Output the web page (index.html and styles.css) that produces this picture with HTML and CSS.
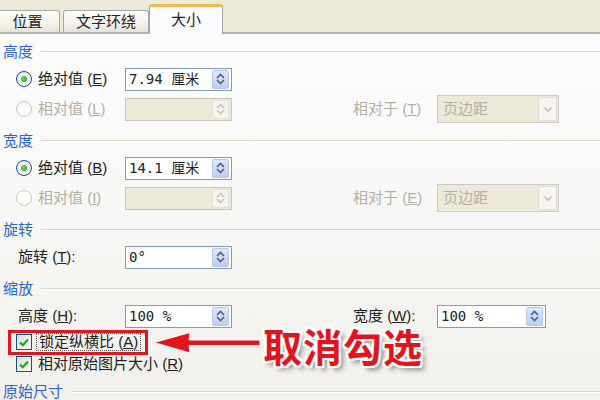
FILE: index.html
```html
<!DOCTYPE html>
<html lang="zh-CN">
<head>
    <meta charset="UTF-8">
    <meta name="viewport" content="width=device-width, initial-scale=1.0">
    <title>设置图片格式 - 大小</title>
    <link rel="stylesheet" href="styles.css">
</head>
<body>

    <div class="dialog">
        <!-- 选项卡 -->
        <div class="tabs">
            <div class="tab first">位置</div>
            <div class="tab">文字环绕</div>
            <div class="tab active">大小</div>
        </div>

        <div class="panel">
            <!-- 高度 -->
            <section class="group">
                <div class="group-title"><span>高度</span></div>
                <div class="row">
                    <label class="option"><span class="radio checked"></span><span>绝对值 (<u>E</u>)</span></label>
                    <div class="spin">
                        <span class="spin-value">7.94 厘米</span>
                        <span class="spin-btn"><svg width="9" height="12" viewBox="0 0 9 12"><path d="M1 5L4.5 1.5L8 5M1 7L4.5 10.5L8 7"/></svg></span>
                    </div>
                </div>
                <div class="row">
                    <label class="option off"><span class="radio"></span><span>相对值 (<u>L</u>)</span></label>
                    <div class="spin off">
                        <span class="spin-value"></span>
                        <span class="spin-btn"><svg width="9" height="12" viewBox="0 0 9 12"><path d="M1 5L4.5 1.5L8 5M1 7L4.5 10.5L8 7"/></svg></span>
                    </div>
                    <span class="side-label off">相对于 (<u>T</u>)</span>
                    <div class="select">
                        <span class="select-value">页边距</span>
                        <span class="select-btn"><svg width="10" height="7" viewBox="0 0 10 7"><path d="M1.5 1.5L5 5L8.5 1.5"/></svg></span>
                    </div>
                </div>
            </section>

            <!-- 宽度 -->
            <section class="group">
                <div class="group-title"><span>宽度</span></div>
                <div class="row">
                    <label class="option"><span class="radio checked"></span><span>绝对值 (<u>B</u>)</span></label>
                    <div class="spin">
                        <span class="spin-value">14.1 厘米</span>
                        <span class="spin-btn"><svg width="9" height="12" viewBox="0 0 9 12"><path d="M1 5L4.5 1.5L8 5M1 7L4.5 10.5L8 7"/></svg></span>
                    </div>
                </div>
                <div class="row">
                    <label class="option off"><span class="radio"></span><span>相对值 (<u>I</u>)</span></label>
                    <div class="spin off">
                        <span class="spin-value"></span>
                        <span class="spin-btn"><svg width="9" height="12" viewBox="0 0 9 12"><path d="M1 5L4.5 1.5L8 5M1 7L4.5 10.5L8 7"/></svg></span>
                    </div>
                    <span class="side-label off">相对于 (<u>E</u>)</span>
                    <div class="select">
                        <span class="select-value">页边距</span>
                        <span class="select-btn"><svg width="10" height="7" viewBox="0 0 10 7"><path d="M1.5 1.5L5 5L8.5 1.5"/></svg></span>
                    </div>
                </div>
            </section>

            <!-- 旋转 -->
            <section class="group">
                <div class="group-title"><span>旋转</span></div>
                <div class="row">
                    <span class="field-label">旋转 (<u>T</u>):</span>
                    <div class="spin">
                        <span class="spin-value">0°</span>
                        <span class="spin-btn"><svg width="9" height="12" viewBox="0 0 9 12"><path d="M1 5L4.5 1.5L8 5M1 7L4.5 10.5L8 7"/></svg></span>
                    </div>
                </div>
            </section>

            <!-- 缩放 -->
            <section class="group">
                <div class="group-title"><span>缩放</span></div>
                <div class="row">
                    <span class="field-label">高度 (<u>H</u>):</span>
                    <div class="spin">
                        <span class="spin-value">100 %</span>
                        <span class="spin-btn"><svg width="9" height="12" viewBox="0 0 9 12"><path d="M1 5L4.5 1.5L8 5M1 7L4.5 10.5L8 7"/></svg></span>
                    </div>
                    <span class="side-label">宽度 (<u>W</u>):</span>
                    <div class="spin short">
                        <span class="spin-value">100 %</span>
                        <span class="spin-btn"><svg width="9" height="12" viewBox="0 0 9 12"><path d="M1 5L4.5 1.5L8 5M1 7L4.5 10.5L8 7"/></svg></span>
                    </div>
                </div>
                <div class="check-row">
                    <label class="option marked">
                        <span class="checkbox"><svg width="10" height="9" viewBox="0 0 10 9"><path d="M1 4.5L3.8 7.2L9 1.5"/></svg></span>
                        <span class="focus">锁定纵横比 (<u>A</u>)</span>
                    </label>
                </div>
                <div class="check-row">
                    <label class="option">
                        <span class="checkbox"><svg width="10" height="9" viewBox="0 0 10 9"><path d="M1 4.5L3.8 7.2L9 1.5"/></svg></span>
                        <span>相对原始图片大小 (<u>R</u>)</span>
                    </label>
                </div>
            </section>

            <!-- 原始尺寸 -->
            <section class="group">
                <div class="group-title"><span>原始尺寸</span></div>
            </section>
        </div>

        <!-- 标注：箭头和文字 -->
        <svg class="note-arrow" width="110" height="26" viewBox="0 0 110 26">
            <path d="M2 12.5L38 2.5L37 10L108 10L108 15.5L37 15.5L38 23Z"/>
        </svg>
        <div class="note-text">取消勾选</div>
    </div>

</body>
</html>
```

FILE: styles.css
```css
/* --- 对话框整体 --- */
body {
    margin: 0;
    width: 600px;
    height: 400px;
    overflow: hidden;
    font-family: "Liberation Sans", "Noto Sans CJK SC", sans-serif;
    font-size: 15px;
    line-height: 20px;
    color: #222;
}

.dialog {
    position: relative;
    width: 600px;
    height: 400px;
    overflow: hidden;
}

u {
    text-decoration: underline;
    text-underline-offset: 1px;
}

/* --- 选项卡 --- */
.tabs {
    display: flex;
    align-items: flex-end;
    height: 32px;
    background-color: #ece9d8;
    border-bottom: 2px solid #b3b6ae;
}

.tab {
    height: 22px;
    box-sizing: border-box;
    padding: 0 12px;
    margin-right: 3px;
    border: 1px solid #a3a9aa;
    border-bottom: none;
    border-radius: 3px 3px 0 0;
    background: linear-gradient(#fefefe, #f2f1ec 60%, #e4e2da);
    color: #222;
    display: flex;
    align-items: center;
    justify-content: center;
}

.tab.first {
    width: 65px;
    margin-left: -5px;
}

.tab.active {
    position: relative;
    width: 74px;
    height: 30px;
    margin: 0 0 -2px -3px;
    border-top: 3px solid #f5b749;
    background: #fcfcfe;
    padding-bottom: 2px;
}

/* --- 内容区域 --- */
.panel {
    height: 366px;
    box-sizing: border-box;
    padding: 8px 0 0 3px;
    background: linear-gradient(#fcfcfe, #f8f8f6 40%, #f1f0eb);
}

.group {
    margin-bottom: 7px;
}

.group-title {
    display: flex;
    align-items: center;
    height: 20px;
    margin-bottom: 2px;
    color: #2b62d6;
}

.group-title::after {
    content: "";
    flex: 1;
    margin-left: 8px;
    border-top: 1px solid #d8d7cc;
    border-bottom: 1px solid #fdfdfb;
}

/* 一行：左侧标签 + 输入框，右侧标签 + 下拉框 */
.row {
    display: grid;
    grid-template-columns: 109px 107px 121px 84px 122px;
    align-items: center;
    height: 30px;
    padding-left: 13px;
}

.option {
    display: flex;
    align-items: center;
    gap: 6px;
    white-space: nowrap;
}

.option.off,
.side-label.off {
    color: #b2b0a5;
}

.side-label {
    grid-column: 4;
    white-space: nowrap;
}

.field-label {
    padding-left: 2px;
    white-space: nowrap;
}

/* 单选按钮 */
.radio {
    width: 16px;
    height: 16px;
    box-sizing: border-box;
    border-radius: 50%;
    border: 1px solid #1c5180;
    background: radial-gradient(circle at 60% 60%, #fff, #e3e2da);
    display: flex;
    align-items: center;
    justify-content: center;
}

.radio.checked::after {
    content: "";
    width: 6px;
    height: 6px;
    border-radius: 50%;
    background: radial-gradient(circle at 40% 40%, #6fdc6f, #1b9a1b);
}

.option.off .radio {
    border-color: #cdcbbf;
    background: #fbfbf9;
}

/* 复选框 */
.check-row {
    display: flex;
    align-items: center;
    height: 22px;
    padding-left: 13px;
}

.checkbox {
    width: 16px;
    height: 16px;
    box-sizing: border-box;
    border: 1px solid #1c5180;
    background: linear-gradient(135deg, #dcdbd3, #fff);
    display: flex;
    align-items: center;
    justify-content: center;
}

.checkbox path {
    fill: none;
    stroke: #21a121;
    stroke-width: 2.2;
}

.option.marked {
    height: 25px;
    box-sizing: border-box;
    margin-left: -8px;
    padding: 0 4px 0 5px;
    border: 3px solid #e0161d;
    gap: 4px;
}

.focus {
    border: 1px dotted #555;
    padding: 0 2px;
    line-height: 16px;
}

/* 数值输入框 */
.spin {
    grid-column: 2;
    height: 23px;
    box-sizing: border-box;
    border: 1px solid #7f9db9;
    background: #fff;
    display: flex;
    align-items: center;
    justify-content: space-between;
    padding: 0 2px 0 3px;
}

.spin.short {
    grid-column: 5;
    width: 109px;
}

.spin-value {
    font-family: "DejaVu Sans Mono", "Noto Sans CJK SC", monospace;
    font-size: 14px;
}

.spin-btn {
    width: 17px;
    height: 19px;
    box-sizing: border-box;
    border: 1px solid #b5c6ee;
    border-radius: 2px;
    background: linear-gradient(#dfe8fd, #bccdf5);
    display: flex;
    align-items: center;
    justify-content: center;
}

.spin-btn path {
    fill: none;
    stroke: #4d6185;
    stroke-width: 1.6;
}

.spin.off {
    border-color: #c9c7ba;
    background: #ece9d8;
}

.spin.off .spin-btn {
    border-color: #e4e2d8;
    background: #f4f3ee;
}

.spin.off .spin-btn path {
    stroke: #c9c7bc;
}

/* 下拉框（不可用） */
.select {
    grid-column: 5;
    height: 28px;
    box-sizing: border-box;
    border: 1px solid #cfcdc1;
    background: #ece9d8;
    display: flex;
    align-items: center;
    justify-content: space-between;
    padding: 0 1px 0 5px;
}

.select-value {
    color: #b2b0a5;
}

.select-btn {
    width: 19px;
    height: 24px;
    box-sizing: border-box;
    border: 1px solid #e0ded4;
    border-radius: 2px;
    background: #f6f5f1;
    display: flex;
    align-items: center;
    justify-content: center;
}

.select-btn path {
    fill: none;
    stroke: #c3c0b4;
    stroke-width: 1.6;
}

/* --- 红色标注 --- */
.note-arrow {
    position: absolute;
    left: 152px;
    top: 330px;
}

.note-arrow path {
    fill: #e3141c;
    stroke: #fff;
    stroke-width: 1;
}

.note-text {
    position: absolute;
    left: 263px;
    top: 327px;
    font-family: "Noto Sans CJK SC", sans-serif;
    font-size: 39px;
    line-height: 36px;
    font-weight: 700;
    letter-spacing: 1px;
    color: #e3141c;
    text-shadow:
        2px 0 0 #fff, -2px 0 0 #fff, 0 2px 0 #fff, 0 -2px 0 #fff,
        2px 2px 0 #fff, -2px -2px 0 #fff, 2px -2px 0 #fff, -2px 2px 0 #fff,
        4px 4px 5px rgba(0, 0, 0, 0.45);
}
```
